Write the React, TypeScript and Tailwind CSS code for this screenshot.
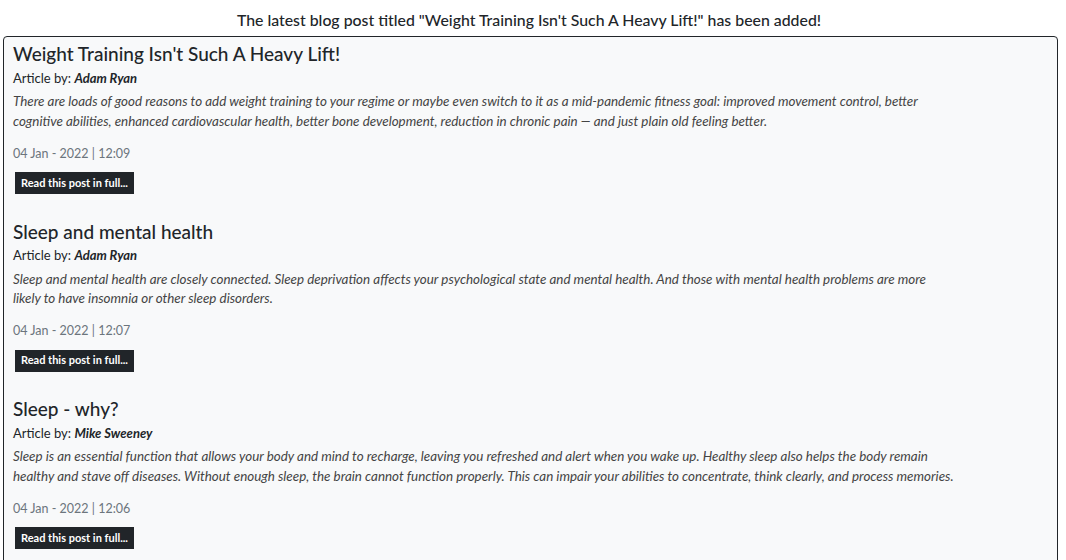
const posts = [
  {
    title: "Weight Training Isn't Such A Heavy Lift!",
    author: "Adam Ryan",
    body: "There are loads of good reasons to add weight training to your regime or maybe even switch to it as a mid-pandemic fitness goal: improved movement control, better cognitive abilities, enhanced cardiovascular health, better bone development, reduction in chronic pain — and just plain old feeling better.",
    date: "04 Jan - 2022 | 12:09",
  },
  {
    title: "Sleep and mental health",
    author: "Adam Ryan",
    body: "Sleep and mental health are closely connected. Sleep deprivation affects your psychological state and mental health. And those with mental health problems are more likely to have insomnia or other sleep disorders.",
    date: "04 Jan - 2022 | 12:07",
  },
  {
    title: "Sleep - why?",
    author: "Mike Sweeney",
    body: "Sleep is an essential function that allows your body and mind to recharge, leaving you refreshed and alert when you wake up. Healthy sleep also helps the body remain healthy and stave off diseases. Without enough sleep, the brain cannot function properly. This can impair your abilities to concentrate, think clearly, and process memories.",
    date: "04 Jan - 2022 | 12:06",
  },
]

function PostItem({ post }: { post: (typeof posts)[number] }) {
  return (
    <div className="mb-[25.5px]">
      <h4 className="text-[19px] leading-[24px] font-medium text-[#212529]">{post.title}</h4>
      <p className="mt-[1.5px] text-[13px] leading-[20px] text-[#212529]">
        Article by: <b className="italic font-bold">{post.author}</b>
      </p>
      <p className="mt-[4.5px] max-w-[942px] text-[13.4px] leading-[19.5px] italic text-[#444]">{post.body}</p>
      <p className="mt-[12.5px] text-[12.5px] leading-[20px] text-[#6c757d]">{post.date}</p>
      <button className="mt-[8.5px] ml-[2px] h-[22px] bg-[#212529] px-[6px] text-[11px] font-bold text-white">
        Read this post in full...
      </button>
    </div>
  )
}

export default function App() {
  return (
    <div className="h-[560px] overflow-hidden bg-white font-['Lato','Liberation_Sans',sans-serif]">
      <p className="pt-[9px] pr-[8px] text-center text-[15.85px] leading-[22px] font-medium text-[#212529]">
        The latest blog post titled "Weight Training Isn't Such A Heavy Lift!" has been added!
      </p>
      <div className="mx-[3px] mt-[5px] mr-[8px] rounded-[4px] border border-[#212529] bg-[#f8f9fa] px-[9px] pt-[5px]">
        {posts.map((p) => (
          <PostItem key={p.title} post={p} />
        ))}
      </div>
    </div>
  )
}
